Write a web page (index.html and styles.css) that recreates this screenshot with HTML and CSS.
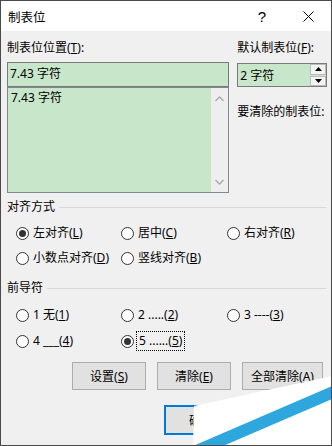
FILE: index.html
```html
<!DOCTYPE html>
<html lang="zh-CN">
<head>
<meta charset="utf-8">
<link rel="stylesheet" href="styles.css">
</head>
<body>
<div class="win">
  <div class="titlebar">
    <span class="title">制表位</span>
    <span class="help">?</span>
    <span class="close"><svg width="11" height="11" viewBox="0 0 11 11"><path d="M0.5 0.5L10.5 10.5M10.5 0.5L0.5 10.5" stroke="#000" stroke-width="1" fill="none"/></svg></span>
  </div>
  <div class="content">
    <div class="top">
      <div class="leftcol">
        <div class="lbl">制表位位置(<u>T</u>):</div>
        <div class="input">7.43 字符</div>
        <div class="list">
          <div class="listtext">7.43 字符</div>
          <div class="vscroll">
            <svg width="9" height="6" viewBox="0 0 9 6"><path d="M0.5 5L4.5 1L8.5 5" stroke="#a8a8a8" stroke-width="1.3" fill="none"/></svg>
            <svg width="9" height="6" viewBox="0 0 9 6"><path d="M0.5 1L4.5 5L8.5 1" stroke="#a8a8a8" stroke-width="1.3" fill="none"/></svg>
          </div>
        </div>
      </div>
      <div class="rightcol">
        <div class="lbl">默认制表位(<u>F</u>):</div>
        <div class="spin">
          <span class="spintext">2 字符</span>
          <div class="spinbtns">
            <div class="sb"><svg width="7" height="4" viewBox="0 0 7 4"><path d="M3.5 0L7 4H0Z" fill="#000"/></svg></div>
            <div class="sb"><svg width="7" height="4" viewBox="0 0 7 4"><path d="M0 0H7L3.5 4Z" fill="#000"/></svg></div>
          </div>
        </div>
        <div class="lbl clearlbl">要清除的制表位:</div>
      </div>
    </div>

    <div class="group g1"><span>对齐方式</span><i class="rule"></i></div>
    <div class="radios r-align">
      <label class="rb"><span class="circ on"></span><span class="txt">左对齐(<u>L</u>)</span></label>
      <label class="rb"><span class="circ"></span><span class="txt">居中(<u>C</u>)</span></label>
      <label class="rb"><span class="circ"></span><span class="txt">右对齐(<u>R</u>)</span></label>
      <label class="rb"><span class="circ"></span><span class="txt">小数点对齐(<u>D</u>)</span></label>
      <label class="rb"><span class="circ"></span><span class="txt">竖线对齐(<u>B</u>)</span></label>
    </div>

    <div class="group g2"><span>前导符</span><i class="rule"></i></div>
    <div class="radios r-lead">
      <label class="rb"><span class="circ"></span><span class="txt">1 无(<u>1</u>)</span></label>
      <label class="rb"><span class="circ"></span><span class="txt">2 .....(<u>2</u>)</span></label>
      <label class="rb"><span class="circ"></span><span class="txt">3 ----(<u>3</u>)</span></label>
      <label class="rb"><span class="circ"></span><span class="txt">4 ___(<u>4</u>)</span></label>
      <label class="rb"><span class="circ on"></span><span class="txt focus">5 ......(<u>5</u>)</span></label>
    </div>

    <div class="btnrow">
      <button class="btn">设置(<u>S</u>)</button>
      <button class="btn">清除(<u>E</u>)</button>
      <button class="btn wide">全部清除(<u>A</u>)</button>
    </div>
    <div class="btnrow okrow">
      <button class="btn ok">确定</button>
      <button class="btn">取消</button>
    </div>
  </div>
  <svg class="watermark" width="332" height="446" viewBox="0 0 332 446">
    <polygon points="194,406 332,376 332,446 193,446" fill="#ffffff"/>
    <polygon points="193,446 332,386 332,399 223,446" fill="#2ea6de"/>
  </svg>
</div>
</body>
</html>
```
FILE: styles.css
```css
* { box-sizing: border-box; }
html, body { margin: 0; padding: 0; }
body {
  font-family: "Noto Sans", "Noto Sans CJK SC", sans-serif;
  font-size: 12px;
  color: #000;
  background: #fff;
}
u { text-decoration: underline; text-underline-offset: 1px; }
.win {
  position: relative;
  width: 332px;
  height: 446px;
  border: 1px solid #4a4a4a;
  background: #f0f0f0;
  overflow: hidden;
}
.titlebar {
  height: 30px;
  background: #fff;
  display: flex;
  align-items: center;
}
.title {
  padding-left: 7px;
  font-size: 12.5px;
  flex: 1;
}
.help, .close {
  width: 46px;
  height: 30px;
  display: flex;
  align-items: center;
  justify-content: center;
}
.help { font-family: "Liberation Sans", sans-serif; font-size: 15px; }
.content {
  padding: 9px 4px 0 6px;
}
.lbl { height: 16px; line-height: 16px; white-space: nowrap; }
.top { display: flex; gap: 8px; }
.leftcol { width: 223px; }
.rightcol { width: 90px; }
.input {
  margin-top: 6px;
  height: 25px;
  border: 1px solid #7a7a7a;
  background: #c7e6ca;
  padding-left: 2px;
  line-height: 22px;
}
.list {
  height: 106px;
  border: 1px solid #828790;
  background: #c7e6ca;
  display: flex;
}
.listtext { flex: 1; padding: 2px 0 0 3px; line-height: 16px; }
.vscroll {
  width: 17px;
  background: #eeeeee;
  display: flex;
  flex-direction: column;
  justify-content: space-between;
  align-items: center;
  padding: 8px 0 7px;
}
.spin {
  margin-top: 7px;
  height: 24px;
  border: 1px solid #7a7a7a;
  background: #c7e6ca;
  display: flex;
  align-items: center;
}
.spintext { flex: 1; padding-left: 2px; }
.spinbtns {
  width: 16px;
  height: 22px;
  display: flex;
  flex-direction: column;
  gap: 1px;
  background: #c7e6ca;
}
.sb {
  flex: 1;
  background: #f3f3f3;
  border: 1px solid #bcbcbc;
  display: flex;
  align-items: center;
  justify-content: center;
}
.clearlbl { margin-top: 17px; }
.group {
  display: flex;
  align-items: center;
  height: 16px;
  line-height: 16px;
}
.g1 { margin-top: 6px; }
.g2 { margin-top: 14px; }
.rule {
  flex: 1;
  height: 1px;
  background: #d9d9d9;
  margin: 0 1px 0 4px;
}
.radios {
  display: grid;
  grid-template-columns: 105px 106px auto;
  padding-left: 9px;
}
.r-align { margin-top: 10px; row-gap: 9px; }
.r-lead { margin-top: 11px; row-gap: 10px; }
.rb {
  display: flex;
  align-items: center;
  height: 16px;
  white-space: nowrap;
}
.circ {
  width: 13px;
  height: 13px;
  border: 1px solid #333;
  border-radius: 50%;
  background: #fff;
  margin-right: 4px;
  display: flex;
  align-items: center;
  justify-content: center;
  flex: none;
}
.circ.on::after {
  content: "";
  width: 7px;
  height: 7px;
  border-radius: 50%;
  background: #333;
}
.txt { line-height: 16px; }
.txt.focus {
  border: 1px dotted #000;
  padding: 1px 2px 1px 2px;
  margin: -2px 0 -2px -2px;
}
.btnrow {
  display: flex;
  justify-content: flex-end;
  gap: 11px;
  padding-right: 4px;
  margin-top: 13px;
}
.btn {
  width: 74px;
  height: 28px;
  background: #e1e1e1;
  border: 1px solid #adadad;
  font-family: "Noto Sans", "Noto Sans CJK SC", sans-serif;
  font-size: 12px;
  color: #000;
  padding: 0;
}
.btn.wide { width: 81px; }
.okrow { margin-top: 15px; }
.okrow .btn { height: 30px; }
.btn.ok { border: 2px solid #0078d7; }
.watermark {
  position: absolute;
  left: -1px;
  top: -1px;
  pointer-events: none;
}
```
